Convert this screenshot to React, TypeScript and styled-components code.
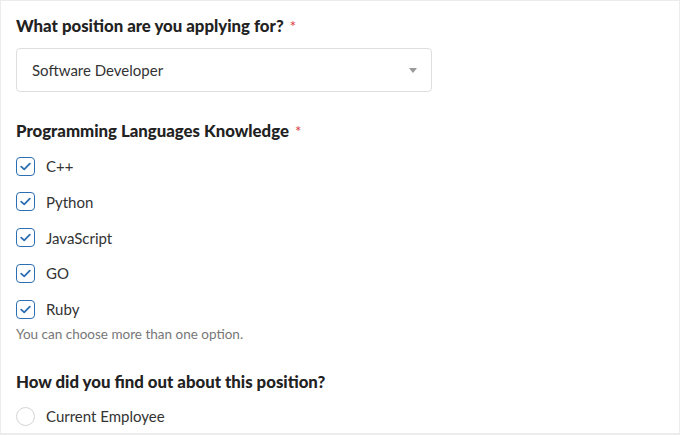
import styled, { createGlobalStyle } from 'styled-components'

const GlobalStyle = createGlobalStyle`
  html, body {
    margin: 0;
    padding: 0;
    background: #fff;
  }
  body {
    font-family: Lato, "Noto Sans", sans-serif;
    color: #333;
  }
`

const Page = styled.div`
  width: 680px;
  height: 435px;
  box-sizing: border-box;
  border: 1px solid #ececec;
  border-bottom-width: 2px;
  padding: 15px 15px 0 15px;
  overflow: hidden;
`

const Field = styled.div<{ gap?: number }>`
  margin-bottom: ${({ gap }) => gap ?? 0}px;
`

const Label = styled.div<{ space: number }>`
  font-size: 16.8px;
  font-weight: 900;
  color: #222;
  line-height: 20px;
  margin-bottom: ${({ space }) => space}px;
`

const Required = styled.span`
  color: #d63638;
  font-weight: 400;
  font-size: 15px;
  margin-left: 6px;
`

const Select = styled.div`
  width: 416px;
  height: 44px;
  box-sizing: border-box;
  border: 1px solid #dedede;
  border-radius: 4px;
  display: flex;
  align-items: center;
  justify-content: space-between;
  padding: 0 14px 0 15px;
  font-size: 15px;
  color: #333;
`

const Caret = styled.span`
  width: 0;
  height: 0;
  border-left: 4.5px solid transparent;
  border-right: 4.5px solid transparent;
  border-top: 5px solid #999;
`

const Options = styled.div`
  display: flex;
  flex-direction: column;
  gap: 15.75px;
`

const Option = styled.label`
  display: flex;
  align-items: center;
  gap: 11px;
  font-size: 15px;
  color: #333;
  line-height: 20px;
  height: 20px;
`

const Box = styled.span`
  width: 19px;
  height: 19px;
  box-sizing: border-box;
  border: 1.5px solid #2d6fb3;
  border-radius: 4px;
  display: flex;
  align-items: center;
  justify-content: center;
  flex-shrink: 0;
`

const Radio = styled.span`
  width: 19px;
  height: 19px;
  box-sizing: border-box;
  border: 1px solid #d4d4d4;
  border-radius: 50%;
  flex-shrink: 0;
`

const Help = styled.div`
  font-size: 13.5px;
  color: #777;
  margin-top: 6px;
  line-height: 18px;
`

const Check = () => (
  <svg width="11" height="9" viewBox="0 0 11 9" fill="none">
    <path d="M1.2 4.6 L4.2 7.4 L9.8 1.6" stroke="#2d6fb3" strokeWidth="1.8" strokeLinecap="round" strokeLinejoin="round" />
  </svg>
)

const languages = ['C++', 'Python', 'JavaScript', 'GO', 'Ruby']

export default function App() {
  return (
    <>
      <GlobalStyle />
      <Page>
        <Field gap={29}>
          <Label space={12}>What position are you applying for?<Required>*</Required></Label>
          <Select>
            Software Developer
            <Caret />
          </Select>
        </Field>
        <Field gap={29}>
          <Label space={15}>Programming Languages Knowledge<Required>*</Required></Label>
          <Options>
            {languages.map((l) => (
              <Option key={l}>
                <Box><Check /></Box>
                {l}
              </Option>
            ))}
          </Options>
          <Help>You can choose more than one option.</Help>
        </Field>
        <Field>
          <Label space={14}>How did you find out about this position?</Label>
          <Options>
            <Option>
              <Radio />
              Current Employee
            </Option>
          </Options>
        </Field>
      </Page>
    </>
  )
}
